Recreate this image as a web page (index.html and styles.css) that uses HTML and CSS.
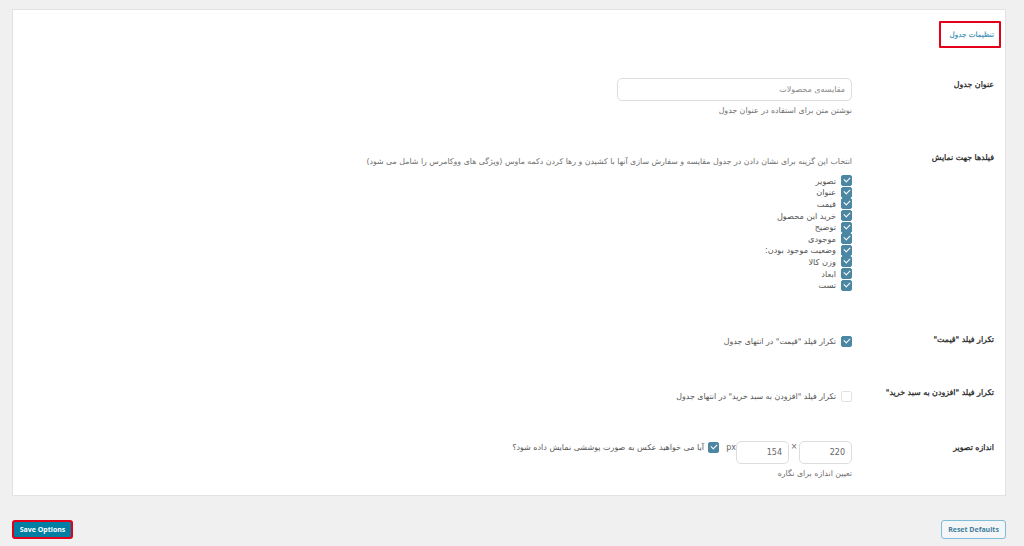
FILE: index.html
```html
<!DOCTYPE html>
<html lang="fa" dir="rtl">
<head>
    <meta charset="UTF-8">
    <title>تنظیمات جدول</title>
    <link rel="stylesheet" href="styles.css">
</head>
<body>
    <div class="panel">
        <h2 class="panel-title"><span class="marked">تنظیمات جدول</span></h2>

        <div class="row row-title">
            <div class="row-label">عنوان جدول</div>
            <div class="row-field">
                <input type="text" class="text-input" placeholder="مقایسه‌ی محصولات">
                <p class="desc">نوشتن متن برای استفاده در عنوان جدول</p>
            </div>
        </div>

        <div class="row row-fields">
            <div class="row-label">فیلدها جهت نمایش</div>
            <div class="row-field">
                <p class="desc desc-top">انتخاب این گزینه برای نشان دادن در جدول مقایسه و سفارش سازی آنها با کشیدن و رها کردن دکمه ماوس (ویژگی های ووکامرس را شامل می شود)</p>
                <ul class="check-list">
                    <li><span class="check on"></span>تصویر</li>
                    <li><span class="check on"></span>عنوان</li>
                    <li><span class="check on"></span>قیمت</li>
                    <li><span class="check on"></span>خرید این محصول</li>
                    <li><span class="check on"></span>توضیح</li>
                    <li><span class="check on"></span>موجودی</li>
                    <li><span class="check on"></span>وضعیت موجود بودن:</li>
                    <li><span class="check on"></span>وزن کالا</li>
                    <li><span class="check on"></span>ابعاد</li>
                    <li><span class="check on"></span>تست</li>
                </ul>
            </div>
        </div>

        <div class="row row-price">
            <div class="row-label">تکرار فیلد "قیمت"</div>
            <div class="row-field">
                <div class="check-line"><span class="check on"></span>تکرار فیلد "قیمت" در انتهای جدول</div>
            </div>
        </div>

        <div class="row row-cart">
            <div class="row-label">تکرار فیلد "افزودن به سبد خرید"</div>
            <div class="row-field">
                <div class="check-line"><span class="check"></span>تکرار فیلد "افزودن به سبد خرید" در انتهای جدول</div>
            </div>
        </div>

        <div class="row row-size">
            <div class="row-label">اندازه تصویر</div>
            <div class="row-field">
                <div class="size-line">
                    <input type="text" class="num-input" value="220">
                    <span class="times">×</span>
                    <input type="text" class="num-input" value="154">
                    <span class="unit">px</span>
                    <span class="check on"></span>
                    <span class="size-note">آیا می خواهید عکس به صورت پوششی نمایش داده شود؟</span>
                </div>
                <p class="desc">تعیین اندازه برای نگاره</p>
            </div>
        </div>
    </div>

    <div class="actions">
        <button type="button" class="btn btn-reset">Reset Defaults</button>
        <button type="button" class="btn btn-save">Save Options</button>
    </div>
</body>
</html>
```

FILE: styles.css
```css
* {
    box-sizing: border-box;
}
body {
    margin: 0;
    padding: 9px 18px 0 12px;
    height: 546px;
    overflow: hidden;
    background-color: #f0f0f0;
    color: #444;
    font-family: "DejaVu Sans", sans-serif;
    font-size: 8px;
}
.panel {
    width: 994px;
    height: 487px;
    padding: 11px 4px 0 0;
    background-color: #fff;
    border: 1px solid #e2e2e2;
}
.panel-title {
    margin: 0;
    height: 27px;
    font-size: 7.2px;
    font-weight: normal;
    color: #3d8fb5;
    -webkit-text-stroke: 0.2px #3d8fb5;
}
.marked {
    display: inline-block;
    width: 62px;
    height: 27px;
    line-height: 23px;
    padding-right: 5px;
    border: 2px solid #e3001b;
    border-radius: 1px;
    white-space: nowrap;
}
.row {
    display: flex;
    padding-right: 7px;
}
.row-label {
    width: 142px;
    flex: none;
    color: #222;
    font-size: 7.9px;
    line-height: 12px;
    -webkit-text-stroke: 0.25px #222;
    white-space: nowrap;
}
.row-field {
    flex: 1;
}
.row-title {
    margin-top: 30px;
}
.row-title .row-label {
    padding-top: 1px;
}
.row-fields {
    margin-top: 36px;
}
.row-fields .row-label {
    margin-top: -1px;
}
.row-price {
    margin-top: 44px;
}
.row-price .row-label {
    margin-top: -1px;
}
.row-cart {
    margin-top: 42px;
}
.row-cart .row-label {
    margin-top: -3px;
}
.row-size {
    margin-top: 38px;
}
.row-size .row-label {
    padding-top: 1px;
}
.desc {
    margin: 4px 0 0 0;
    color: #6f6f6f;
    font-size: 7.85px;
    line-height: 12px;
    white-space: nowrap;
}
.desc-top {
    margin-top: 3px;
}
.text-input {
    display: block;
    width: 235px;
    height: 23px;
    padding: 0 6px;
    border: 1px solid #ddd;
    border-radius: 5px;
    background: #fff;
    font-family: inherit;
    font-size: 8px;
}
.text-input::placeholder {
    color: #888;
}
.check-list {
    list-style: none;
    margin: 7px 0 0 0;
    padding: 0;
    font-size: 8.2px;
}
.check-list li {
    display: flex;
    align-items: center;
    height: 11.6px;
    color: #555;
    white-space: nowrap;
}
.check {
    flex: none;
    display: inline-block;
    position: relative;
    width: 11px;
    height: 11px;
    margin-left: 5px;
    border: 1px solid #e2e2e2;
    border-radius: 2px;
    background: #fff;
}
.check.on {
    border-color: #4b86a3;
    background: #4b86a3;
}
.check.on::after {
    content: "";
    position: absolute;
    left: 2px;
    top: 1px;
    width: 5px;
    height: 3px;
    border-left: 1px solid #fff;
    border-bottom: 1px solid #fff;
    transform: rotate(-45deg);
}
.check-line {
    display: flex;
    align-items: center;
    height: 12px;
    margin-top: 1px;
    color: #555;
    font-size: 7.85px;
    white-space: nowrap;
}
.size-line {
    display: flex;
    align-items: flex-start;
    color: #555;
    white-space: nowrap;
}
.num-input {
    width: 53px;
    height: 23px;
    padding: 0 6px;
    border: 1px solid #ddd;
    border-radius: 5px;
    background: #fff;
    color: #666;
    font-family: inherit;
    font-size: 8px;
}
.times {
    width: 10px;
    text-align: center;
    color: #666;
    line-height: 12px;
}
.unit {
    width: 10px;
    margin-top: 1px;
    margin-left: 7px;
    color: #666;
    line-height: 12px;
}
.size-line .check {
    margin-top: 1px;
    margin-left: 4px;
}
.size-note {
    margin-top: 1px;
    line-height: 12px;
}
.actions {
    display: flex;
    justify-content: space-between;
    margin-top: 24px;
}
.btn {
    height: 19px;
    padding: 0;
    border-radius: 3px;
    font-family: "Open Sans", sans-serif;
    font-size: 7px;
    font-weight: bold;
}
.btn-reset {
    width: 65px;
    border: 1px solid #7fbcd6;
    background: #f3f5f6;
    color: #3f7f9f;
}
.btn-save {
    width: 61px;
    border: 2px solid #e3001b;
    background: #007ea3;
    color: #fff;
}
```
